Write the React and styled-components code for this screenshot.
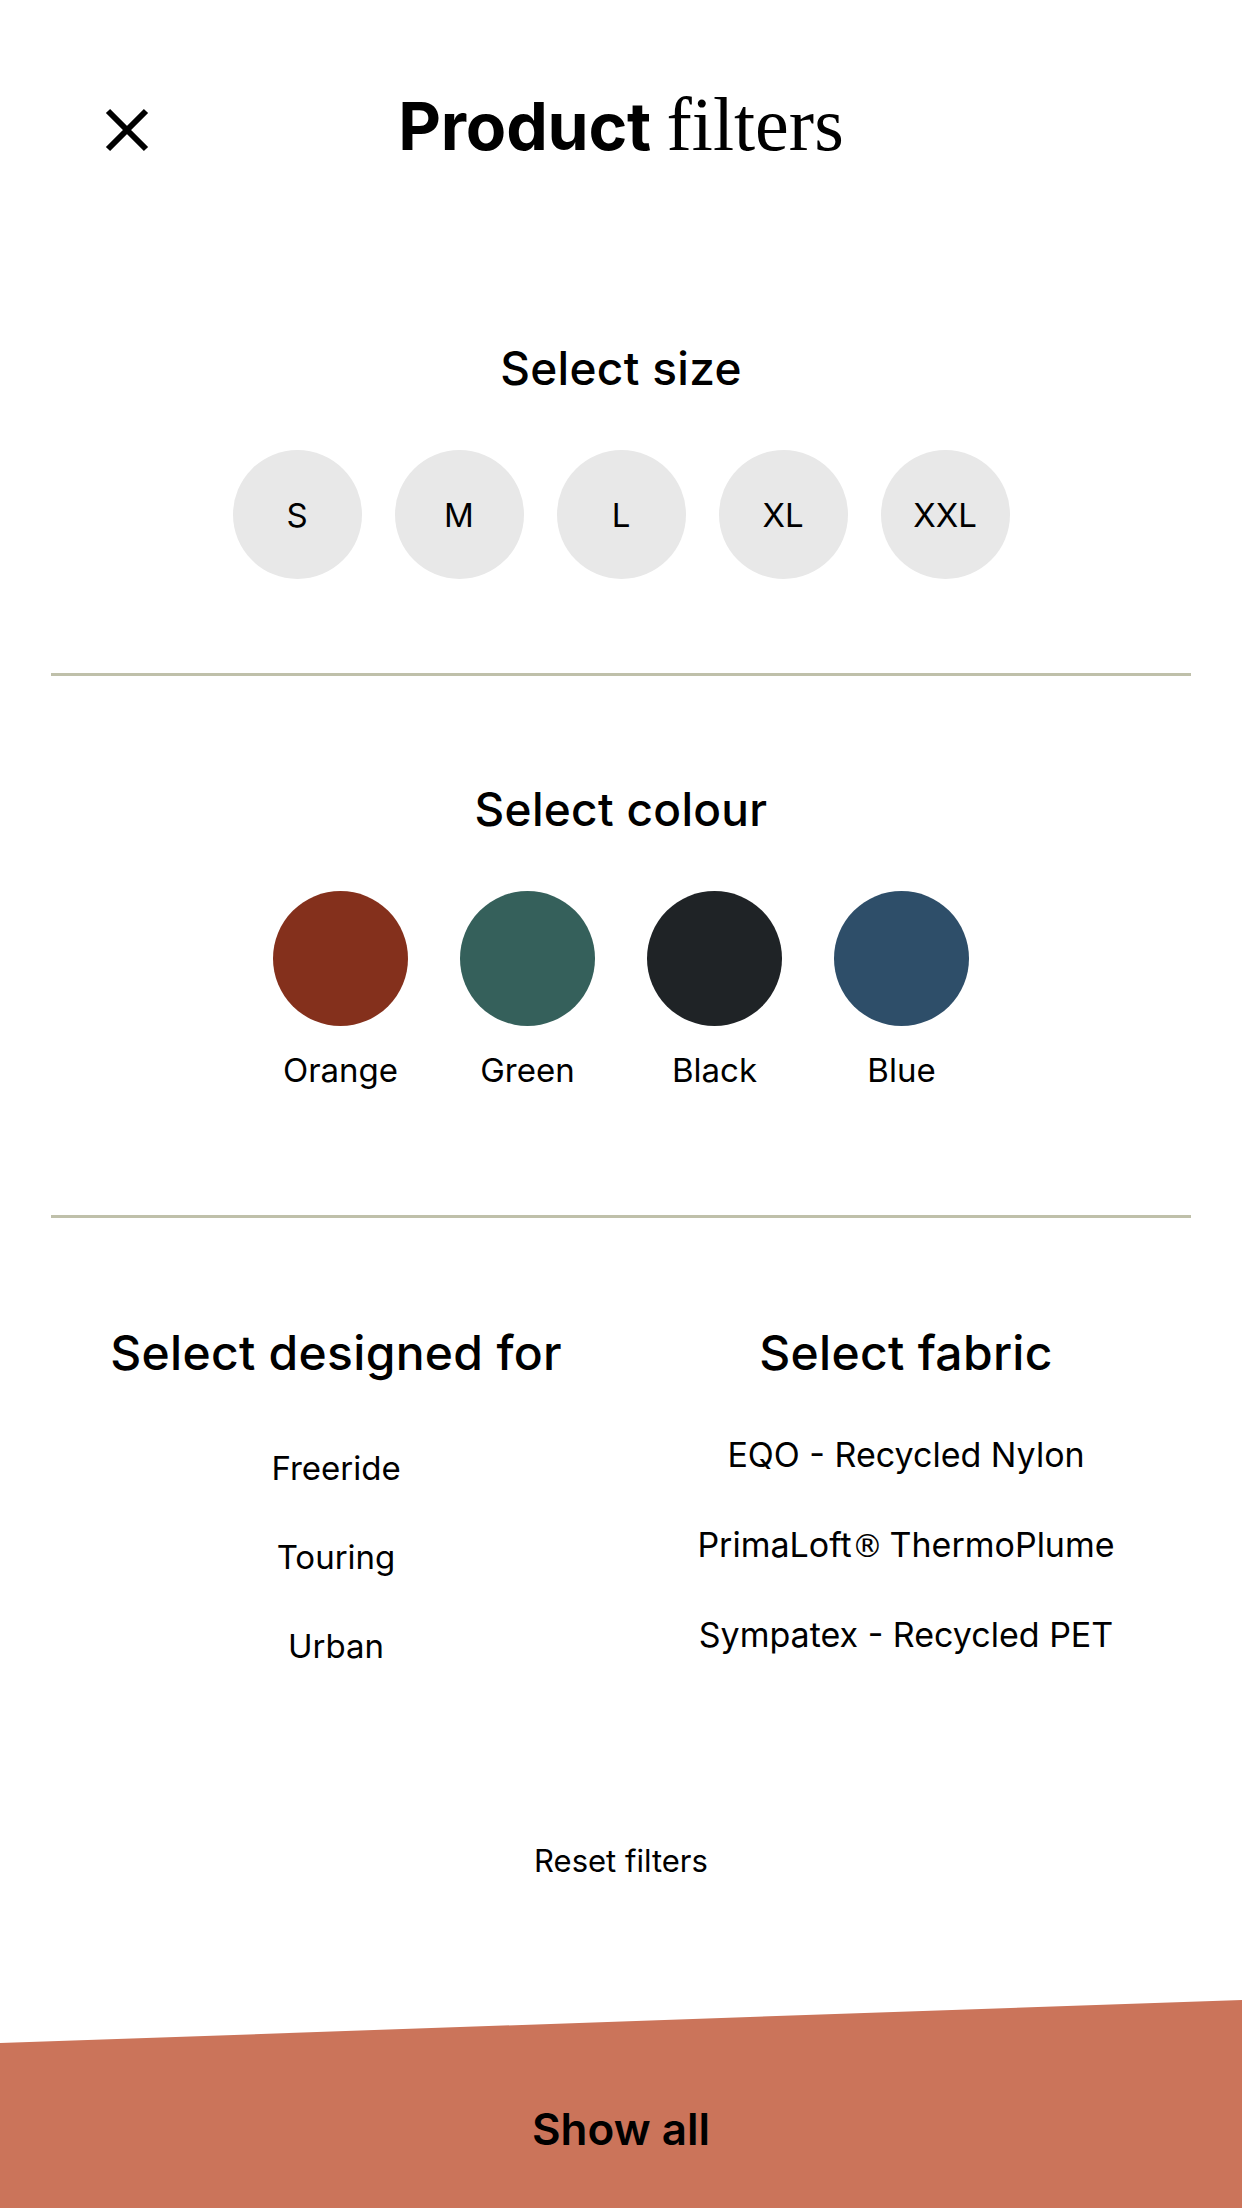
import React from "react";
import styled, { createGlobalStyle } from "styled-components";

const GlobalStyle = createGlobalStyle`
  html, body { margin: 0; padding: 0; background: #fff; }
  body { font-family: Inter, "Noto Sans", sans-serif; color: #000; }
  * { box-sizing: border-box; }
`;

const Page = styled.div`
  width: 1242px;
  min-height: 2208px;
  display: flex;
  flex-direction: column;
  background: #fff;
`;

const Header = styled.header`
  display: grid;
  grid-template-columns: 1fr auto 1fr;
  align-items: center;
  padding-top: 86px;
  padding-bottom: 6px;
`;

const CloseButton = styled.button`
  justify-self: start;
  margin-left: 104px;
  margin-top: 20px;
  width: 46px;
  height: 46px;
  padding: 0;
  border: 0;
  background: none;
  display: flex;
  cursor: pointer;
`;

const Title = styled.h1`
  margin: 0;
  line-height: 1;
  height: 68px;
  font-weight: 700;
  font-size: 66px;
  letter-spacing: -0.2px;
  white-space: nowrap;
`;

const SerifWord = styled.span`
  font-family: "Liberation Serif", serif;
  font-weight: 400;
  font-size: 76px;
  letter-spacing: 0;
`;

const Section = styled.section`
  display: flex;
  flex-direction: column;
  align-items: center;
  padding: ${(p) => p.$top}px 0 ${(p) => p.$bottom}px;
`;

const Heading = styled.h2`
  margin: 0;
  font-size: ${(p) => p.$size || 46}px;
  font-weight: 500;
  line-height: 1;
  letter-spacing: 0.3px;
`;

const Divider = styled.hr`
  margin: 0 51px;
  height: 3px;
  border: 0;
  background: #bfc0aa;
`;

const SizeRow = styled.div`
  display: flex;
  gap: 33px;
  margin-top: 59px;
`;

const SizeChip = styled.button`
  width: 129px;
  height: 129px;
  border-radius: 50%;
  border: 0;
  background: #e8e8e8;
  font-family: Inter, sans-serif;
  font-size: 33px;
  font-weight: 400;
  color: #000;
  display: flex;
  align-items: center;
  justify-content: center;
  padding: 0;
`;

const ColourRow = styled.div`
  display: flex;
  gap: 52px;
  margin-top: 59px;
`;

const ColourItem = styled.div`
  width: 135px;
  display: flex;
  flex-direction: column;
  align-items: center;
  gap: 28px;
`;

const Swatch = styled.div`
  width: 135px;
  height: 135px;
  border-radius: 50%;
  background: ${(p) => p.$color};
`;

const ColourLabel = styled.span`
  font-size: 33px;
  line-height: 1;
  white-space: nowrap;
`;

const Columns = styled.div`
  display: grid;
  grid-template-columns: 1fr 1fr;
  margin: 0 51px;
  padding-top: 111px;
`;

const Column = styled.div`
  display: flex;
  flex-direction: column;
  align-items: center;
`;

const OptionList = styled.ul`
  list-style: none;
  margin: ${(p) => p.$offset}px 0 0;
  padding: 0;
  display: flex;
  flex-direction: column;
  align-items: center;
  gap: ${(p) => p.$gap}px;
`;

const Option = styled.li`
  font-size: ${(p) => p.$size}px;
  line-height: 1;
  white-space: nowrap;
`;

const Mark = styled.span`
  font-family: "DejaVu Sans", sans-serif;
  font-size: 0.92em;
  margin-right: -3px;
`;

const ResetLink = styled.button`
  align-self: center;
  margin-top: 182px;
  border: 0;
  background: none;
  padding: 0;
  font-family: Inter, sans-serif;
  font-size: 31px;
  line-height: 1;
  color: #000;
`;

const Footer = styled.button`
  margin-top: auto;
  height: 208px;
  width: 100%;
  border: 0;
  background: #cb745a;
  clip-path: polygon(0 43px, 100% 0, 100% 100%, 0 100%);
  display: flex;
  align-items: center;
  justify-content: center;
  padding: 50px 0 0;
  font-family: Inter, sans-serif;
  font-size: 44px;
  font-weight: 600;
  color: #000;
`;

const CloseIcon = () => (
  <svg width="46" height="46" viewBox="0 0 46 46">
    <path d="M4 4 L42 42 M42 4 L4 42" stroke="#000" strokeWidth="6" fill="none" />
  </svg>
);

const sizes = ["S", "M", "L", "XL", "XXL"];
const colours = [
  { name: "Orange", color: "#84301c" },
  { name: "Green", color: "#35605b" },
  { name: "Black", color: "#1f2326" },
  { name: "Blue", color: "#2e4e69" },
];
const designedFor = ["Freeride", "Touring", "Urban"];
const fabrics = [
  "EQO - Recycled Nylon",
  <>PrimaLoft<Mark>®</Mark> ThermoPlume</>,
  "Sympatex - Recycled PET",
];

export default function App() {
  return (
    <Page>
      <GlobalStyle />
      <Header>
        <CloseButton aria-label="Close">
          <CloseIcon />
        </CloseButton>
        <Title>
          Product <SerifWord>filters</SerifWord>
        </Title>
        <div />
      </Header>

      <Section $top={185} $bottom={94}>
        <Heading>Select size</Heading>
        <SizeRow>
          {sizes.map((s) => (
            <SizeChip key={s}>{s}</SizeChip>
          ))}
        </SizeRow>
      </Section>

      <Divider />

      <Section $top={110} $bottom={128}>
        <Heading>Select colour</Heading>
        <ColourRow>
          {colours.map((c) => (
            <ColourItem key={c.name}>
              <Swatch $color={c.color} />
              <ColourLabel>{c.name}</ColourLabel>
            </ColourItem>
          ))}
        </ColourRow>
      </Section>

      <Divider />

      <Columns>
        <Column>
          <Heading $size={48}>Select designed for</Heading>
          <OptionList $offset={75} $gap={56}>
            {designedFor.map((d) => (
              <Option key={d} $size={33}>{d}</Option>
            ))}
          </OptionList>
        </Column>
        <Column>
          <Heading $size={48}>Select fabric</Heading>
          <OptionList $offset={61} $gap={56}>
            {fabrics.map((f, i) => (
              <Option key={i} $size={34}>{f}</Option>
            ))}
          </OptionList>
        </Column>
      </Columns>

      <ResetLink>Reset filters</ResetLink>

      <Footer>Show all</Footer>
    </Page>
  );
}
